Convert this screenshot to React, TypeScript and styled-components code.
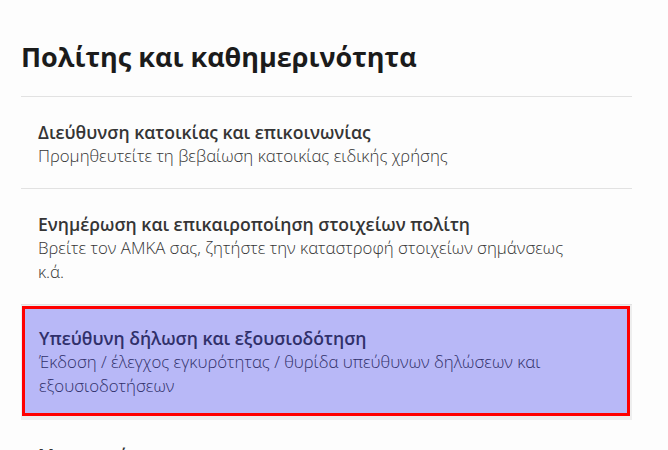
import React from "react";
import styled, { createGlobalStyle } from "styled-components";

type Service = {
    title: string
    description: string
    highlighted?: boolean
};

const services: Service[] = [
    {
        title: "Διεύθυνση κατοικίας και επικοινωνίας",
        description: "Προμηθευτείτε τη βεβαίωση κατοικίας ειδικής χρήσης",
    },
    {
        title: "Ενημέρωση και επικαιροποίηση στοιχείων πολίτη",
        description: "Βρείτε τον ΑΜΚΑ σας, ζητήστε την καταστροφή στοιχείων σημάνσεως κ.ά.",
    },
    {
        title: "Υπεύθυνη δήλωση και εξουσιοδότηση",
        description: "Έκδοση / έλεγχος εγκυρότητας / θυρίδα υπεύθυνων δηλώσεων και εξουσιοδοτήσεων",
        highlighted: true,
    },
    {
        title: "Μεταφορές",
        description: "Οχήματα, άδειες οδήγησης και μετακινήσεις",
    },
];

const GlobalStyle = createGlobalStyle`
    html, body {
        margin: 0;
        background: #fdfdfd;
        font-family: "Open Sans", "Liberation Sans", sans-serif;
    }
`

const Page = styled.main`
    width: 611px;
    height: 413px;
    padding: 37px 0 0 21px;
    overflow: hidden;
`

const PageTitle = styled.h2`
    margin: 0 0 19px;
    font-size: 27px;
    line-height: 40px;
    font-weight: 700;
    color: #1b1b1b;
`

const ServiceList = styled.ul`
    list-style: none;
    margin: 0;
    padding: 0;
    border-top: 1px solid #e2e2e2;
`

const ServiceItem = styled.li<{ $highlighted?: boolean }>`
    border-bottom: 1px solid #e2e2e2;
    ${({ $highlighted }) => $highlighted && `
        background: #eeeeee;
        border-bottom: none;
        padding: 1px 2px 4px 1px;
    `}
`

const ServiceLink = styled.a<{ $highlighted?: boolean }>`
    display: block;
    padding: 23px 60px 20px 17px;
    text-decoration: none;
    color: #353535;
    ${({ $highlighted }) => $highlighted && `
        background: #b8b8f7;
        border: 3px solid #ff0000;
        padding: 17px 57px 15px 14px;
        color: #30306a;
    `}
`

const ServiceTitle = styled.span`
    display: block;
    font-size: 17.6px;
    line-height: 24px;
    font-weight: 600;
`

const ServiceText = styled.span`
    display: block;
    font-size: 16.8px;
    line-height: 24px;
    font-weight: 300;
`

export default function App() {
    return (
        <>
            <GlobalStyle />
            <Page>
                <PageTitle>Πολίτης και καθημερινότητα</PageTitle>
                <ServiceList>
                    {services.map(({ title, description, highlighted }, index) => (
                        <ServiceItem key={index} $highlighted={highlighted}>
                            <ServiceLink href="#" $highlighted={highlighted}>
                                <ServiceTitle>{title}</ServiceTitle>
                                <ServiceText>{description}</ServiceText>
                            </ServiceLink>
                        </ServiceItem>
                    ))}
                </ServiceList>
            </Page>
        </>
    );
}
